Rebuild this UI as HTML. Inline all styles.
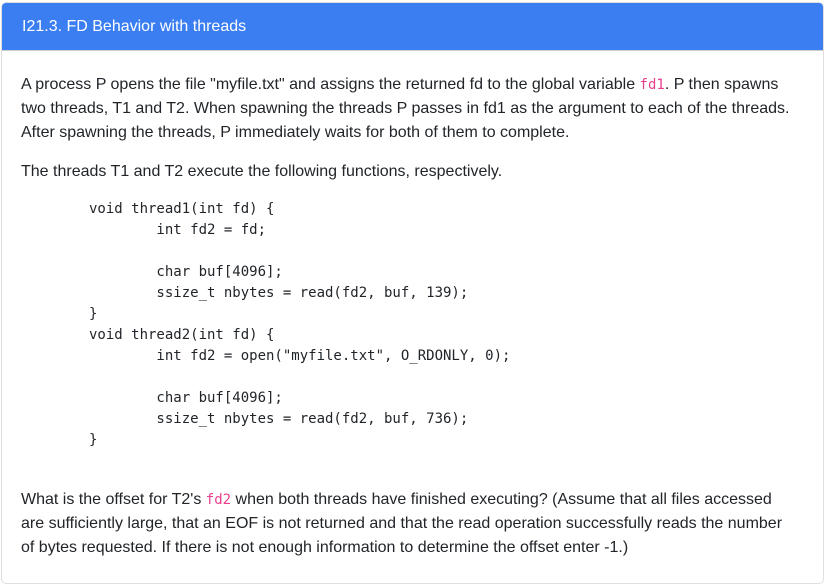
<!DOCTYPE html>
<html><head><meta charset="utf-8"><style>
html,body{margin:0;padding:0;background:#fff;width:825px;height:570px;overflow:hidden}
.card{position:absolute;left:1px;top:2px;width:821px;height:580px;border:1px solid #dfdfdf;border-radius:5px;overflow:hidden}
.hd{background:#3a7ef2;height:47px;color:#fff;font:16px/47px "Liberation Sans",sans-serif;padding-left:20px;border-bottom:1px solid #d0d0d0}
.bd{padding:22px 0 0 19px;font:16px/24px "Liberation Sans",sans-serif;color:#212529}
p{margin:0 0 15px 0}
code{font:14px "DejaVu Sans Mono",monospace;color:#e83e8c}
pre{font:14px/21px "DejaVu Sans Mono",monospace;color:#212529;margin:5px 0 37px 68px}
</style></head><body>
<div class="card">
<div class="hd">I21.3. FD Behavior with threads</div>
<div class="bd">
<p>A process P opens the file "myfile.txt" and assigns the returned fd to the global variable <code>fd1</code>. P then spawns<br>two threads, T1 and T2. When spawning the threads P passes in fd1 as the argument to each of the threads.<br>After spawning the threads, P immediately waits for both of them to complete.</p>
<p>The threads T1 and T2 execute the following functions, respectively.</p>
<pre>void thread1(int fd) {
        int fd2 = fd;

        char buf[4096];
        ssize_t nbytes = read(fd2, buf, 139);
}
void thread2(int fd) {
        int fd2 = open("myfile.txt", O_RDONLY, 0);

        char buf[4096];
        ssize_t nbytes = read(fd2, buf, 736);
}</pre>
<p>What is the offset for T2's <code>fd2</code> when both threads have finished executing? (Assume that all files accessed<br>are sufficiently large, that an EOF is not returned and that the read operation successfully reads the number<br>of bytes requested. If there is not enough information to determine the offset enter -1.)</p>
</div></div>
</body></html>
